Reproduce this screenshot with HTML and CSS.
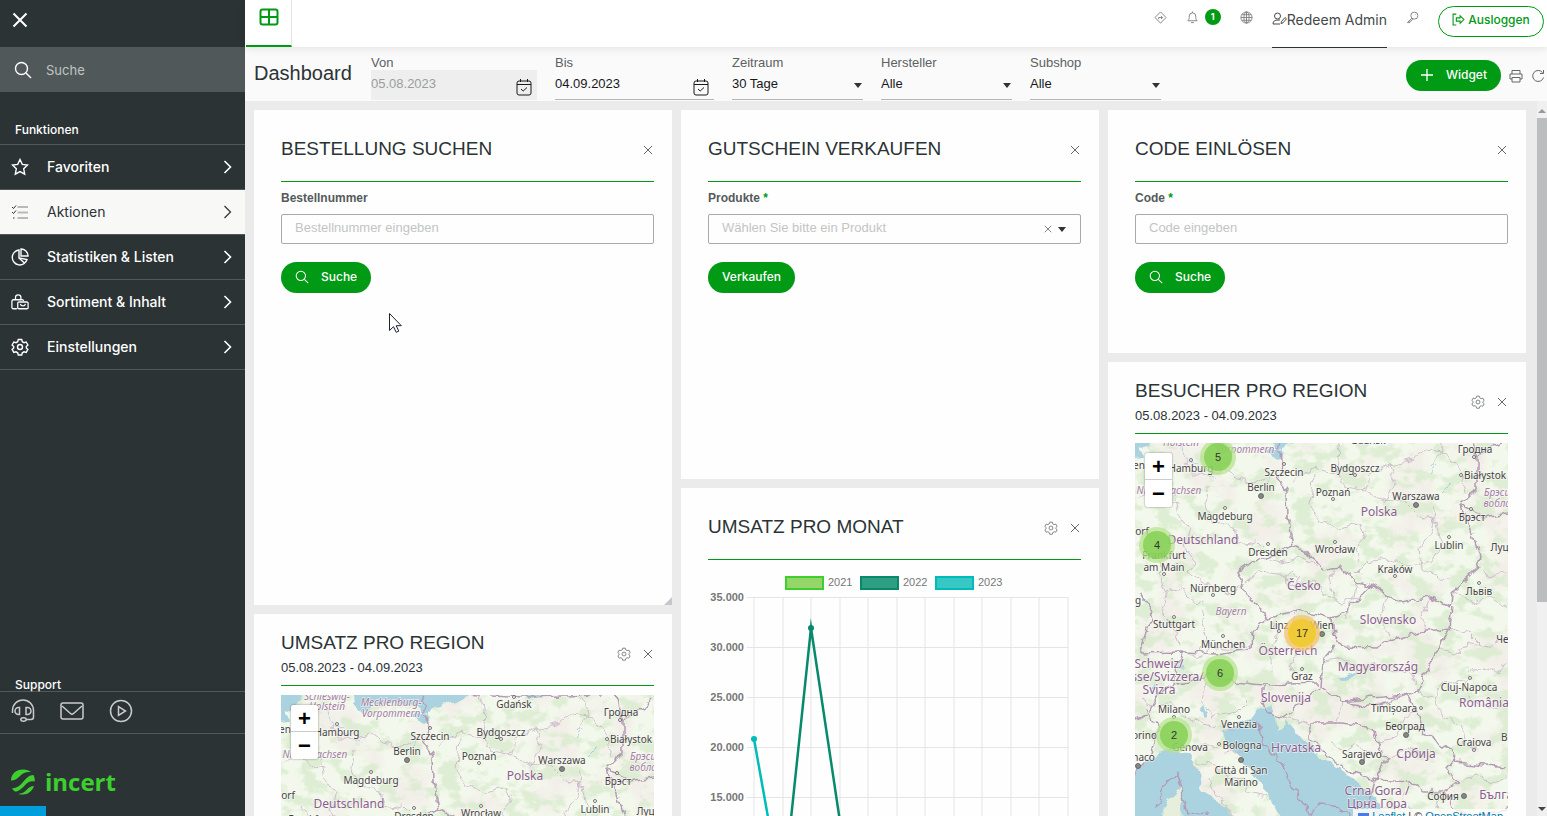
FILE: index.html
```html
<!DOCTYPE html>
<html lang="de">

<head>
  <meta charset="UTF-8">
  <title>Dashboard</title>
  <meta name="viewport" content="width=device-width, initial-scale=1.0">
  <link rel="stylesheet" href="styles.css">
</head>

<body>

  <!-- shared icons and map layer -->
  <svg class="sprite" aria-hidden="true">
    <symbol id="i-search" viewBox="0 0 18 18"><circle cx="7.5" cy="7.5" r="6"/><path d="M12 12l5 5"/></symbol>
    <symbol id="i-close" viewBox="0 0 16 16"><path d="M1.500 1.500l13 13M14.500 1.500l-13 13"/></symbol>
    <symbol id="i-chevron" viewBox="0 0 8 14"><path d="M1 1l6 6-6 6"/></symbol>
    <symbol id="i-gear" viewBox="0 0 18 18">
      <path d="M7.300 1.500h3.400l.6 2.200 1.700 1 2.200-.7 1.700 3-1.600 1.500v1.400l1.600 1.500-1.700 3-2.200-.6-1.700 1-.6 2.200H7.300l-.6-2.200-1.700-1-2.200.6-1.700-3 1.600-1.500V8.500L1.100 7l1.700-3 2.200.7 1.700-1z"/>
      <circle cx="9" cy="9" r="2.500"/>
    </symbol>
    <symbol id="i-calendar" viewBox="0 0 16 18"><path d="M3 3h10a2 2 0 0 1 2 2v10a2 2 0 0 1-2 2H3a2 2 0 0 1-2-2V5a2 2 0 0 1 2-2zM1 6.500h14M4.500 1v3M11.500 1v3M5 11l2.200 2L11 9.500"/></symbol>

    <filter id="rough" x="-5%" y="-5%" width="110%" height="110%">
      <feTurbulence type="fractalNoise" baseFrequency="0.1" numOctaves="2" seed="4" result="n"/>
      <feDisplacementMap in="SourceGraphic" in2="n" scale="10" xChannelSelector="R" yChannelSelector="G"/>
    </filter>
    <filter id="forest" x="0" y="0" width="100%" height="100%">
      <feTurbulence type="fractalNoise" baseFrequency="0.05 0.07" numOctaves="5" seed="11"/>
      <feColorMatrix values="0 0 0 0 0.69  0 0 0 0 0.83  0 0 0 0 0.61  0 7 0 0 -3.4"/>
    </filter>
    <filter id="fields" x="0" y="0" width="100%" height="100%">
      <feTurbulence type="fractalNoise" baseFrequency="0.02" numOctaves="4" seed="3"/>
      <feColorMatrix values="0 0 0 0 0.90  0 0 0 0 0.94  0 0 0 0 0.84  5 0 0 0 -1.7"/>
    </filter>

    <symbol id="map-base" viewBox="0 0 373 396">
      <rect width="373" height="396" fill="#f2efe9"/>
      <rect width="373" height="396" filter="url(#fields)"/>
      <rect width="373" height="396" filter="url(#forest)" opacity="0.75"/>
      <g filter="url(#rough)">
        <g fill="#aad3df">
          <path d="M-8-8h30l-7 22-10 5 2 8-15 2z"/>
          <path d="M72-8h120l-3 9-20 6-26 11-8-8-20-2-22 1-10 9-7-5z"/>
          <path d="M236-8h26l-3 9-12 3z"/>
          <path d="M108 291l16-12 12-5 4 12 3 17 8-15 6 8 12 14 22 20 32 20 16 17 20 25-108 1-12-18-10-18-17-23-19-20-5-14z"/>
          <path d="M-8 350l8-8 15-13 17-12 9 2 14 7 10 15 2 20 25 15 10 22H-8z"/>
          <path d="M204 249l8-5 11-4-4 5-10 5z"/>
          <path d="M126 17l10 2 12-2-2 12-6-2zM44 239l3-5 2 6zM14 256l6-5 2 5zM68 276l3 5-1 6-4-4z"/>
        </g>
        <path d="M28 376l8-10 9-9 2 12-3 30H30z" fill="#e8eedc"/>
        <path d="M43 12l6 14 12 8 9 10 12 3M137 44l-6 12M318 50l-12 12M300 34l-6 8" fill="none" stroke="#aad3df"/>
        <g class="regions">
          <path d="M50 28l8 15 20 0 10-6 14 10 22 5 12-8M73 56l-2 18 6 18 22 5 4 16 18-3 8 8M40 62l4 24 9 14-4 16 10 14-6 12 12 9 20 4 9 8 16-10M5 66l14-4 12 10 14 2M20 110l8 14-4 22 8 18-6 18 12 12 6 20M28 162l20-4 12 14 8-2-2 20 6 18-8 14M158 50l20-12 24 4 8 14 18 3 20 10 22 2 14 14 18 6 4 22-10 18-24 6-18-10-22 4-12 12M178 42l-2 32 6 14 22 10 22-6 4 12-8 16 2 10"/>
          <path d="M202 42l2-24-6-18M228 60l8-18 20-8 22-6 14-10 20 4 14 20 4 20M250 71l10-22-4-16M296 34l12-14-10-20M300 75l-4 26-12 16 2 22 14 6 14 4M111 151l14-10 20 2 14 12 22-6 4 14 20 8 18-4M130 127l14 4 22-4 16 6M200 136l-4 16 4 16M150 146l6-4 7 6-4 5-8-1z"/>
          <path d="M48 221l16 6 12-10 14 2 12-6 16 2M70 254l-4 18 12 14 24-4 12-12M8 268l12 8 18-4 10 12 22 10 30 6M30 296l10 16 20 4 30-2 18 6M60 330l22 4 10 12 16 2 4 14 20 4M75 345l4 18 12 10 10 20M140 190l2 18-10 12 4 20M162 179l-6 18 8 18-8 20 10 16M187 231l18-4 14 8 20-3 14 10 22-2 6 12M222 151l-4 20-8 18M252 164l-6 26 8 14M295 167l-8 18 4 16"/>
          <path d="M148 286l20 4 7 4M208 271l-8 22M282 262l18 4 8-14 22-2 12-14 20 4 14-10M300 266l6 20 20 8 4 18 14 8M330 250l6 20 20 6 16-4M303 217l20 6 10-12 18 4 20-8M342 137l14 8 18-4M318 161l20 10 14-6 20 10M315 197l20 6 12 12M195 310l16 10 10-6 16 10M252 327l20-10 16 4M242 311l18-4 10-20 12-6M275 351l-8 18 12 14M305 361l-4 14 12 16M322 351l20-6 14 8 16-8M108 321l-20 2"/>
        </g>
        <g class="borders">
          <path d="M141 1l4 19 2 22-3 10 8 10 1 23 5 29-30 13-26 12 5 12 3 13 18 17 5 6-15 14-1 16-34 6-35-2-43 1"/>
          <path d="M158 114l24 15 6 10 15-3 19 15 15 4 15 9 13 7 30-4 20 9 3-15 24-24 3-10-10-33-10-20 17-17 0-33-10-26"/>
          <path d="M133 187l29-8 36 8 14-6 13-14 12-13M198 187l2 17 8 12 34 1 13-8 30-8 30-4 3-21M315 197l-12 20-15 30-6 15-14 4-36 10-24-5-23-17 2-23 13-17"/>
          <path d="M5 221l6-20 7-17-12-20M48 221l-8 20-2 13 20-4 17-6 23 7 30 3 54-2M128 254v13l4 14 16 5 20-15 17-15M208 271l30-4 34-3 10 17 6 20 27 16 5 14 52 5M320 327l-8 10 10 14-14 10M38 254l-14 8-10 20-14 6"/>
          <path d="M175 292h33l30 5 4 14 10 16-10 17-2 5-28-10-17-12-20-20zM240 349l35 2 14 10 19 0M240 349l-4 20 10 16M308 361l10 16 20 8 34-6M325 74l24 12 24-4M342 24l20-10 10-12M182-2l60 4 80-2"/>
          <path d="M0 342l14-14 8-28-10-24M122 290l6 24 20 20 12 24 14 24 14-10 16 4 12 12M22 378l6-24 14-12 4 18 6 24 22-2"/>
        </g>
      </g>
    </symbol>
  </svg>

  <div class="app">

    <aside class="sidebar">
      <button class="menu-close" type="button" aria-label="Menü schließen"><svg class="icon"><use href="#i-close"/></svg></button>
      <div class="menu-search">
        <svg class="icon"><use href="#i-search"/></svg>
        <input type="text" placeholder="Suche" aria-label="Suche">
      </div>
      <h3 class="menu-title">Funktionen</h3>
      <ul class="menu">
        <li><a href="#">
          <svg class="icon" viewBox="0 0 18 18"><path d="M9 1.500l2.300 4.900 5.200.7-3.800 3.700 1 5.400L9 13.600l-4.700 2.600 1-5.400L1.500 7.100l5.200-.7z"/></svg>
          <span>Favoriten</span><svg class="chevron"><use href="#i-chevron"/></svg></a></li>
        <li><a href="#" class="active">
          <svg class="icon" viewBox="0 0 18 18"><path d="M6.500 4H17M6.500 9.500H17M6.500 15H17" stroke="#b9bab5" stroke-width="2"/><path d="M1 4l1.500 1.500L5 2.500M1 9l1.500 1.500L5 7.500M2 15h1.500" stroke-width="1"/></svg>
          <span>Aktionen</span><svg class="chevron"><use href="#i-chevron"/></svg></a></li>
        <li><a href="#">
          <svg class="icon" viewBox="0 0 18 18"><path d="M8 2a7.500 7.500 0 1 0 8 9.500L8 10z"/><path d="M10 1v7h7a7 7 0 0 0-7-7zM8 10l5.500 5"/></svg>
          <span>Statistiken &amp; Listen</span><svg class="chevron"><use href="#i-chevron"/></svg></a></li>
        <li><a href="#">
          <svg class="icon" viewBox="0 0 20 18"><path d="M6.500 16.500h-4A1.500 1.500 0 0 1 1 15V8a1.500 1.500 0 0 1 1.500-1.500h10A1.500 1.500 0 0 1 14 8M5 6V4a3 3 0 0 1 6 0v2M8.500 9H18A1.200 1.200 0 0 1 19 10.200v5.100a1.200 1.200 0 0 1-1 1.200H8.500a1.200 1.200 0 0 1-1-1.200v-5.100a1.200 1.200 0 0 1 1-1.200zM10.500 11a2.800 2.800 0 0 0 5.500 0"/></svg>
          <span>Sortiment &amp; Inhalt</span><svg class="chevron"><use href="#i-chevron"/></svg></a></li>
        <li><a href="#">
          <svg class="icon"><use href="#i-gear"/></svg>
          <span>Einstellungen</span><svg class="chevron"><use href="#i-chevron"/></svg></a></li>
      </ul>

      <div class="support">
        <h3 class="support-title">Support</h3>
        <div class="support-links">
          <a href="#" aria-label="Hotline"><svg viewBox="0 0 24 24"><path d="M1.500 14v-2.500a10.500 10.500 0 0 1 21 0V18a2.500 2.500 0 0 1-2.500 2.500h-5M8.500 8.500v7H7.500a3.500 3.500 0 0 1 0-7zM15 8.500v7h1.500a3.500 3.500 0 0 0 0-7z"/><ellipse cx="12.500" cy="20.500" rx="2.700" ry="1.700"/></svg></a>
          <a href="#" aria-label="E-Mail"><svg viewBox="0 0 24 24"><rect x="1" y="4" width="22" height="16" rx="2"/><path d="M2 7l8.500 7.500a2.200 2.200 0 0 0 3 0L22 7"/></svg></a>
          <a href="#" aria-label="Videos"><svg viewBox="0 0 24 24"><circle cx="12" cy="12" r="10.500"/><path d="M9.500 7.500v9l7-4.500z"/></svg></a>
        </div>
      </div>
      <a class="brand" href="#">
        <svg viewBox="0 0 24 26"><path d="M0 11.500C0 5 5 .5 12 .5c3.500 0 6 1 8 2.500-5-.5-8 1-11 4-2.500 2.500-5 4.500-9 4.500z"/><path d="M1 19.500c5-.5 8-3 11-6.500s6-7 10.500-7c1 2 1.500 4 1.200 6.500-4-1-7 .5-10 4S6.500 23 4 22.500c-1.500-1-2.500-2-3-3z"/><path d="M7 25c5-.5 7-2.500 9-4.500s4-3.500 7-3.500c-2 5.500-6 8.500-11 8.500-2 0-3.500 0-5-.5z"/></svg>
        <span>incert</span>
      </a>
      <div class="progress"></div>
    </aside>

    <main class="main">

      <header class="topbar">
        <a class="tab" href="#" aria-label="Dashboard"><svg viewBox="0 0 20 18"><rect x="1.500" y="1.500" width="17" height="15" rx="2"/><path d="M10 1.500v15M1.500 9h17"/></svg></a>
        <nav class="tools">
          <a href="#" aria-label="Wegweiser"><svg viewBox="0 0 14 14"><path d="M7 1l6 6-6 6-6-6zM5 9V7h4M7.500 5.200L9.300 7 7.500 8.800"/></svg></a>
          <a href="#" class="bell" aria-label="Meldungen"><svg viewBox="0 0 14 14"><path d="M2 10.500c1.500-1.500 1.500-3 1.500-5a3.500 3.500 0 0 1 7 0c0 2 0 3.500 1.500 5zM5.500 12.500h3M7 2V.5"/></svg><span class="badge">1</span></a>
          <a href="#" aria-label="Sprache"><svg viewBox="0 0 14 14"><circle cx="7" cy="7" r="6"/><ellipse cx="7" cy="7" rx="2.800" ry="6"/><path d="M1 7h12M2 4h10M2 10h10M7 1v12"/></svg></a>
          <a href="#" class="user"><svg viewBox="0 0 15 14"><circle cx="5.500" cy="4" r="3"/><path d="M8 12H1c0-3 2-4 5-4h2M9 11.500l.5-2L13 5.500l1.500 1.300-3.500 4z"/></svg>Redeem Admin</a>
          <a href="#" aria-label="Passwort"><svg viewBox="0 0 14 14"><circle cx="9" cy="5" r="3.800"/><path d="M6.300 7.700L1.500 12.500M1.500 12.500H4v-1.500h1.500L7.200 8.500M10 3.500h.5"/></svg></a>
          <button class="logout" type="button"><svg viewBox="0 0 12 12"><path d="M4 1H1v10h3M4 4.500h3.500V2.500L11 6 7.500 9.500v-2H4z"/></svg>Ausloggen</button>
        </nav>
      </header>

      <div class="filters">
        <h1>Dashboard</h1>
        <div class="field field-from">
          <label for="from">Von</label>
          <div class="control"><input type="text" id="from" value="05.08.2023" disabled><svg><use href="#i-calendar"/></svg></div>
        </div>
        <div class="field field-to">
          <label for="to">Bis</label>
          <div class="control"><input type="text" id="to" value="04.09.2023"><svg><use href="#i-calendar"/></svg></div>
        </div>
        <div class="field">
          <label for="period">Zeitraum</label>
          <div class="control caret"><select id="period"><option>30 Tage</option></select></div>
        </div>
        <div class="field">
          <label for="vendor">Hersteller</label>
          <div class="control caret"><select id="vendor"><option>Alle</option></select></div>
        </div>
        <div class="field">
          <label for="subshop">Subshop</label>
          <div class="control caret"><select id="subshop"><option>Alle</option></select></div>
        </div>
        <div class="actions">
          <button class="btn" type="button"><svg viewBox="0 0 14 14"><path d="M7 1v12M1 7h12"/></svg>Widget</button>
          <button class="tool" type="button" aria-label="Drucken"><svg viewBox="0 0 14 14"><path d="M3 5V1.500h8V5M3 10H1V5h12v5h-2M3 8.500h8V13H3z"/></svg></button>
          <button class="tool" type="button" aria-label="Aktualisieren"><svg viewBox="0 0 14 14"><path d="M11.500 3.500A5.500 5.500 0 1 0 12.500 8.500M12.500 1v3.500H9"/></svg></button>
        </div>
      </div>

      <div class="content">
        <div class="board">

          <section class="card order-search">
            <div class="card-head">
              <h2>BESTELLUNG SUCHEN</h2>
              <button class="tool small" type="button" aria-label="Entfernen"><svg><use href="#i-close"/></svg></button>
            </div>
            <form class="card-body">
              <label for="order">Bestellnummer</label>
              <input type="text" id="order" placeholder="Bestellnummer eingeben">
              <button class="btn" type="button"><svg><use href="#i-search"/></svg>Suche</button>
            </form>
            <span class="resize"></span>
          </section>

          <section class="card voucher">
            <div class="card-head">
              <h2>GUTSCHEIN VERKAUFEN</h2>
              <button class="tool small" type="button" aria-label="Entfernen"><svg><use href="#i-close"/></svg></button>
            </div>
            <form class="card-body">
              <label for="product">Produkte <span class="required">*</span></label>
              <div class="combo caret">
                <select id="product"><option>Wählen Sie bitte ein Produkt</option></select>
                <button type="button" class="clear" aria-label="Auswahl löschen"><svg><use href="#i-close"/></svg></button>
              </div>
              <button class="btn" type="button">Verkaufen</button>
            </form>
          </section>

          <section class="card redeem">
            <div class="card-head">
              <h2>CODE EINLÖSEN</h2>
              <button class="tool small" type="button" aria-label="Entfernen"><svg><use href="#i-close"/></svg></button>
            </div>
            <form class="card-body">
              <label for="code">Code <span class="required">*</span></label>
              <input type="text" id="code" placeholder="Code eingeben">
              <button class="btn" type="button"><svg><use href="#i-search"/></svg>Suche</button>
            </form>
          </section>

          <section class="card sales-region">
            <div class="card-head">
              <div>
                <h2>UMSATZ PRO REGION</h2>
                <p>05.08.2023 - 04.09.2023</p>
              </div>
              <button class="tool" type="button" aria-label="Einstellungen"><svg><use href="#i-gear"/></svg></button>
              <button class="tool small" type="button" aria-label="Entfernen"><svg><use href="#i-close"/></svg></button>
            </div>
            <div class="card-body">
              <div class="map">
                <svg class="map-layer" viewBox="0 0 373 380">
                  <use href="#map-base" width="373" height="396"/>
                  <g class="places">
                    <text x="56" y="41">Hamburg</text><circle cx="56" cy="29" r="1.500"/>
                    <text x="149" y="45">Szczecin</text><circle cx="149" cy="33" r="1.500"/>
                    <text x="220" y="41">Bydgoszcz</text><circle cx="220" cy="44" r="1.500"/>
                    <text x="233" y="13">Gdańsk</text><circle cx="233" cy="2" r="1.500"/>
                    <text x="340" y="21">Гродна</text><circle cx="339" cy="25" r="1.500"/>
                    <text x="350" y="48">Białystok</text><circle cx="326" cy="44" r="1.500"/>
                    <text x="126" y="60">Berlin</text><circle class="capital" cx="126" cy="65" r="2.500"/>
                    <text x="198" y="65">Poznań</text><circle cx="198" cy="68" r="1.500"/>
                    <text x="281" y="69">Warszawa</text><circle class="capital" cx="281" cy="74" r="2.500"/>
                    <text x="337" y="90">Брэст</text><circle cx="336" cy="78" r="1.500"/>
                    <text x="90" y="89">Magdeburg</text><circle cx="90" cy="77" r="1.500"/>
                    <text x="4" y="104">dorf</text>
                    <text x="4" y="38">en</text>
                    <text x="133" y="125">Dresden</text><circle cx="133" cy="113" r="1.500"/>
                    <text x="200" y="122">Wrocław</text><circle cx="200" cy="111" r="1.500"/>
                    <text x="314" y="118">Lublin</text><circle cx="314" cy="106" r="1.500"/>
                    <text x="370" y="120">Луцьк</text>
                    <text x="29" y="128">Frankfurt</text>
                  </g>
                  <g class="regions-text">
                    <text x="46" y="5">Schleswig-</text><text x="46" y="15">Holstein</text>
                    <text x="110" y="11">Mecklenburg-</text><text x="110" y="22">Vorpommern</text>
                    <text x="34" y="63">Niedersachsen</text>
                    <text x="370" y="65">Брэсцкая</text><text x="370" y="76">вобласць</text>
                  </g>
                  <g class="countries">
                    <text x="68" y="113">Deutschland</text><text x="244" y="85">Polska</text>
                  </g>
                </svg>
                <div class="zoom"><button type="button" aria-label="Vergrößern">+</button><button type="button" aria-label="Verkleinern">−</button></div>
              </div>
            </div>
          </section>

          <section class="card sales-month">
            <div class="card-head">
              <h2>UMSATZ PRO MONAT</h2>
              <button class="tool" type="button" aria-label="Einstellungen"><svg><use href="#i-gear"/></svg></button>
              <button class="tool small" type="button" aria-label="Entfernen"><svg><use href="#i-close"/></svg></button>
            </div>
            <div class="card-body">
              <svg class="chart" viewBox="0 0 373 400">
                <g stroke-width="2">
                  <rect x="78" y="8" width="37" height="12" fill="#96d56a" stroke="#3ccf2e"/>
                  <rect x="153" y="8" width="37" height="12" fill="#2f9f83" stroke="#078a6c"/>
                  <rect x="228" y="8" width="37" height="12" fill="#37c8c6" stroke="#00bcb8"/>
                </g>
                <g class="legend"><text x="120" y="17">2021</text><text x="195" y="17">2022</text><text x="270" y="17">2023</text></g>
                <path class="grid-x" d="M75 28v350M103 28v350M132 28v350M160 28v350M189 28v350M217 28v350M246 28v350M274 28v350M303 28v350M331 28v350M360 28v350"/>
                <path class="grid-y" d="M46 28v350M39 28.500h321M39 78.500h321M39 128.500h321M39 178.500h321M39 228.500h321M39 278.500h321M39 328.500h321"/>
                <g class="ticks">
                  <text x="36" y="32">35.000</text><text x="36" y="82">30.000</text><text x="36" y="132">25.000</text>
                  <text x="36" y="182">20.000</text><text x="36" y="232">15.000</text><text x="36" y="282">10.000</text>
                </g>
                <path class="line y2023" d="M46 170l29 162"/>
                <path class="line y2022" d="M75 326L103 59l40 267"/>
                <circle cx="46" cy="170" r="3" fill="#00bcb8"/>
                <circle cx="103" cy="59" r="3" fill="#078a6c"/>
              </svg>
            </div>
          </section>

          <section class="card visitors">
            <div class="card-head">
              <div>
                <h2>BESUCHER PRO REGION</h2>
                <p>05.08.2023 - 04.09.2023</p>
              </div>
              <button class="tool" type="button" aria-label="Einstellungen"><svg><use href="#i-gear"/></svg></button>
              <button class="tool small" type="button" aria-label="Entfernen"><svg><use href="#i-close"/></svg></button>
            </div>
            <div class="card-body">
              <div class="map">
                <svg class="map-layer" viewBox="0 12 373 380">
                  <use href="#map-base" width="373" height="396"/>
                  <g class="places">
                    <text x="56" y="41">Hamburg</text><circle cx="56" cy="29" r="1.500"/>
                    <text x="149" y="45">Szczecin</text><circle cx="149" cy="33" r="1.500"/>
                    <text x="220" y="41">Bydgoszcz</text><circle cx="220" cy="44" r="1.500"/>
                    <text x="233" y="13">Gdańsk</text>
                    <text x="340" y="22">Гродна</text><circle cx="339" cy="26" r="1.500"/>
                    <text x="350" y="48">Białystok</text><circle cx="326" cy="44" r="1.500"/>
                    <text x="126" y="60">Berlin</text><circle class="capital" cx="126" cy="65" r="2.500"/>
                    <text x="198" y="65">Poznań</text><circle cx="198" cy="68" r="1.500"/>
                    <text x="281" y="69">Warszawa</text><circle class="capital" cx="281" cy="74" r="2.500"/>
                    <text x="337" y="90">Брэст</text><circle cx="336" cy="78" r="1.500"/>
                    <text x="90" y="89">Magdeburg</text><circle cx="90" cy="77" r="1.500"/>
                    <text x="4" y="104">dorf</text><text x="4" y="38">en</text>
                    <text x="133" y="125">Dresden</text><circle cx="133" cy="113" r="1.500"/>
                    <text x="200" y="122">Wrocław</text><circle cx="200" cy="111" r="1.500"/>
                    <text x="314" y="118">Lublin</text><circle cx="314" cy="106" r="1.500"/>
                    <text x="370" y="120">Луцьк</text>
                    <text x="29" y="128">Frankfurt</text><text x="29" y="140">am Main</text><circle cx="29" cy="143" r="1.500"/>
                    <text x="260" y="142">Kraków</text><circle cx="260" cy="145" r="1.500"/>
                    <text x="78" y="161">Nürnberg</text><circle cx="78" cy="164" r="1.500"/>
                    <text x="344" y="164">Львів</text><circle cx="344" cy="152" r="1.500"/>
                    <text x="39" y="197">Stuttgart</text><circle cx="39" cy="186" r="1.500"/>
                    <text x="3" y="173">g</text>
                    <text x="144" y="198">Linz</text><circle cx="144" cy="200" r="1.500"/>
                    <text x="187" y="198">Wien</text><circle class="capital" cx="187" cy="203" r="2.500"/>
                    <text x="88" y="217">München</text><circle cx="88" cy="205" r="1.500"/>
                    <text x="382" y="212">Чернівці</text>
                    <text x="167" y="249">Graz</text><circle cx="167" cy="238" r="1.500"/>
                    <text x="334" y="260">Cluj-Napoca</text><circle cx="335" cy="247" r="1.500"/>
                    <text x="39" y="282">Milano</text><circle cx="39" cy="286" r="1.500"/>
                    <text x="259" y="281">Timișoara</text><circle cx="286" cy="277" r="1.500"/>
                    <text x="270" y="299">Београд</text><circle class="capital" cx="271" cy="304" r="2.500"/>
                    <text x="104" y="297">Venezia</text><circle cx="104" cy="286" r="1.500"/>
                    <text x="7" y="308">Torino</text>
                    <text x="55" y="320">Genova</text>
                    <text x="107" y="318">Bologna</text><circle cx="84" cy="313" r="1.500"/>
                    <text x="339" y="315">Craiova</text><circle cx="339" cy="319" r="1.500"/>
                    <text x="388" y="310">București</text>
                    <text x="1" y="330">Monaco</text><circle class="capital" cx="3" cy="335" r="2.500"/>
                    <text x="227" y="327">Sarajevo</text><circle class="capital" cx="227" cy="331" r="2.500"/>
                    <text x="106" y="343">Città di San</text><text x="106" y="355">Marino</text><circle class="capital" cx="106" cy="329" r="2.500"/>
                    <text x="308" y="369">София</text><circle class="capital" cx="329" cy="365" r="2.500"/>
                  </g>
                  <g class="regions-text">
                    <text x="46" y="15">Holstein</text><text x="110" y="22">Vorpommern</text>
                    <text x="34" y="63">Niedersachsen</text><text x="96" y="184">Bayern</text>
                    <text x="370" y="65">Брэсцкая</text><text x="370" y="76">вобласць</text>
                  </g>
                  <g class="countries">
                    <text x="68" y="113">Deutschland</text><text x="244" y="85">Polska</text>
                    <text x="169" y="159">Česko</text><text x="253" y="193">Slovensko</text>
                    <text x="153" y="224">Österreich</text><text x="243" y="240">Magyarország</text>
                    <text x="24" y="237">Schweiz/</text><text x="24" y="250">Suisse/Svizzera/</text><text x="24" y="263">Svizra</text>
                    <text x="151" y="271">Slovenija</text><text x="349" y="276">România</text>
                    <text x="161" y="321">Hrvatska</text><text x="281" y="327">Србија</text>
                    <text x="242" y="364">Crna Gora /</text><text x="242" y="377">Црна Гора</text>
                    <text x="372" y="368">България</text>
                  </g>
                  <g class="clusters">
                    <circle cx="83" cy="26" r="18"/><circle class="core" cx="83" cy="26" r="14"/><text x="83" y="30">5</text>
                    <circle cx="22" cy="114" r="18"/><circle class="core" cx="22" cy="114" r="14"/><text x="22" y="118">4</text>
                    <circle cx="85" cy="242" r="18"/><circle class="core" cx="85" cy="242" r="14"/><text x="85" y="246">6</text>
                    <circle cx="39" cy="304" r="18"/><circle class="core" cx="39" cy="304" r="14"/><text x="39" y="308">2</text>
                  </g>
                  <g class="clusters medium">
                    <circle cx="167" cy="202" r="18"/><circle class="core" cx="167" cy="202" r="14"/><text x="167" y="206">17</text>
                  </g>
                </svg>
                <div class="zoom"><button type="button" aria-label="Vergrößern">+</button><button type="button" aria-label="Verkleinern">−</button></div>
                <div class="attribution"><span class="flag"></span><a href="#">Leaflet</a> | © <a href="#">OpenStreetMap</a></div>
              </div>
            </div>
          </section>

        </div>
        <div class="scrollbar"><span class="up"></span><span class="thumb"></span><span class="down"></span></div>
      </div>
    </main>
  </div>

  <svg class="pointer" viewBox="0 0 13 20"><path d="M.5.500v17l4-3.800 2.700 5.600 2.600-1.200-2.600-5.400h5.100z" fill="#fff" stroke="#1b2330"/></svg>

</body>

</html>
```
FILE: styles.css
```css
* {
  box-sizing: border-box;
}

body {
  margin: 0;
  font-family: "Liberation Sans", Arial, sans-serif;
  font-size: 13px;
  color: #2b3335;
  overflow: hidden;
}

h1, h2, h3, p, ul {
  margin: 0;
  padding: 0;
  font-weight: normal;
}

a {
  color: inherit;
  text-decoration: none;
}

button, input, select {
  font-family: inherit;
  font-size: 13px;
  color: inherit;
  border: none;
  padding: 0;
  background: none;
}

button {
  cursor: pointer;
}

svg {
  display: block;
  flex: none;
  fill: none;
  stroke: currentColor;
}

.sprite {
  position: absolute;
  width: 0;
  height: 0;
}

.app {
  display: flex;
  height: 100vh;
}

/* sidebar */

.sidebar {
  display: flex;
  flex-direction: column;
  flex: none;
  width: 245px;
  background: #2b3335;
  color: #fff;
  font-family: Inter, sans-serif;
}

.icon {
  width: 18px;
  height: 18px;
  stroke-width: 1.4;
}

.menu-close {
  height: 47px;
  padding: 0 12px 7px;
}

.menu-close .icon {
  width: 16px;
  height: 16px;
  stroke-width: 2;
}

.menu-search {
  display: flex;
  align-items: center;
  gap: 14px;
  height: 45px;
  padding-left: 14px;
  background: #50585a;
}

.menu-search input {
  flex: 1;
  min-width: 0;
}

.menu-search input::placeholder {
  color: #c0c4c5;
  opacity: 1;
}

.menu-title {
  padding: 30px 15px 6px;
  font-size: 12px;
  line-height: 16px;
  font-weight: 500;
}

.menu {
  list-style: none;
  border-top: 1px solid #50585a;
}

.menu a {
  display: flex;
  align-items: center;
  gap: 18px;
  height: 45px;
  padding: 0 13px 0 11px;
  border-bottom: 1px solid #50585a;
  font-size: 14px;
  font-weight: 500;
}

.menu span {
  flex: 1;
  padding-bottom: 2px;
}

.menu .active {
  background: #f8f8f6;
  color: #2b3335;
  font-weight: normal;
}

.chevron {
  width: 9px;
  height: 14px;
  stroke-width: 1.6;
}

.active .chevron {
  stroke-width: 1.2;
}

.support {
  margin-top: auto;
  border-bottom: 1px solid #50585a;
}

.support-title {
  padding: 0 15px;
  font-size: 12px;
  line-height: 13px;
  font-weight: 500;
  border-bottom: 1px solid #50585a;
}

.support-links {
  display: flex;
  gap: 25px;
  height: 41px;
  padding: 7px 11px;
  color: #c9cbcb;
}

.support-links svg {
  width: 24px;
  height: 24px;
  stroke-width: 1.5;
}

.brand {
  display: flex;
  align-items: center;
  gap: 10px;
  height: 72px;
  padding: 24px 11px 0;
  color: #3ccf2e;
  font: bold 24px "Open Sans", sans-serif;
}

.brand svg {
  width: 24px;
  height: 26px;
  fill: currentColor;
  stroke: none;
}

.brand span {
  line-height: 30px;
}

.progress {
  width: 46px;
  height: 10px;
  background: #009fdc;
}

/* top bar */

.main {
  display: flex;
  flex-direction: column;
  flex: 1;
  min-width: 0;
  background: #ebebeb;
}

.topbar {
  position: relative;
  z-index: 1;
  display: flex;
  justify-content: space-between;
  height: 47px;
  padding: 0 3px 0 1px;
  background: #fff;
  box-shadow: 0 2px 8px rgba(0, 0, 0, 0.09);
}

.tab {
  display: flex;
  justify-content: center;
  width: 46px;
  padding-top: 8px;
  border-right: 1px solid #e4e4e4;
  border-bottom: 2px solid #009a14;
  color: #009a14;
}

.tab svg {
  width: 20px;
  height: 18px;
  stroke-width: 2;
}

.tools {
  display: flex;
  gap: 19px;
  font-family: Inter, sans-serif;
  color: #7c8182;
}

.tools a {
  display: flex;
  align-items: center;
  height: 34px;
}

.tools svg {
  width: 13px;
  height: 13px;
}

.bell {
  gap: 6px;
}

.badge {
  width: 16px;
  height: 16px;
  border-radius: 50%;
  background: #009a14;
  color: #fff;
  font-size: 9px;
  font-weight: bold;
  line-height: 16px;
  text-align: center;
}

.tools .user {
  height: 48px;
  padding-bottom: 9px;
  border-bottom: 1px solid #2b3335;
  color: #44494a;
  font-size: 14px;
}

.tools .user svg {
  width: 15px;
  height: 14px;
}

.logout {
  display: flex;
  align-items: center;
  justify-content: center;
  gap: 3px;
  width: 106px;
  height: 31px;
  margin-top: 6px;
  padding-bottom: 4px;
  border: 1px solid #009a14;
  border-radius: 16px;
  color: #009a14;
  font-weight: 500;
  font-size: 12px;
}

/* filters */

.filters {
  display: flex;
  gap: 18px;
  height: 54px;
  padding: 0 2px 1px 9px;
  background: #fafafa;
}

.filters h1 {
  min-width: 99px;
  font-size: 20px;
  line-height: 53px;
}

.field {
  width: 131px;
  padding-top: 8px;
}

.field-from {
  width: 166px;
}

.field-to {
  width: 159px;
}

.field label {
  display: block;
  height: 15px;
  line-height: 15px;
  color: #5c6162;
}

.control {
  position: relative;
  display: flex;
  height: 30px;
  border-bottom: 1px solid #b5b5b5;
  color: #16191a;
}

.control input,
.control select {
  flex: 1;
  width: 100%;
  min-width: 0;
  padding-bottom: 3px;
}

.control svg {
  width: 16px;
  height: 18px;
  margin: 8px 5px 0 0;
}

.field-from .control {
  background: #eee;
  border-color: #eee;
}

.field-from input {
  color: #9a9e9e;
}

select {
  appearance: none;
}

.caret::after {
  content: "";
  position: absolute;
  right: 1px;
  top: 13px;
  border: 4px solid transparent;
  border-top: 5px solid #333;
  border-bottom: none;
  pointer-events: none;
}

.actions {
  display: flex;
  align-items: center;
  gap: 8px;
  margin-left: auto;
  padding-top: 4px;
}

.btn {
  display: inline-flex;
  align-items: center;
  gap: 12px;
  height: 31px;
  padding: 0 14px 2px;
  border-radius: 16px;
  background: #009a14;
  color: #fff;
  font-family: Inter, sans-serif;
  font-size: 12px;
  font-weight: 500;
}

.btn svg {
  width: 14px;
  height: 14px;
  stroke-width: 1.3;
}

.tool {
  color: #62686a;
}

.tool svg {
  width: 14px;
  height: 14px;
}

.small svg {
  width: 10px;
  height: 10px;
  stroke-width: 1.6;
}

/* widget board: 117px rows */

.content {
  display: flex;
  flex: 1;
  min-height: 0;
}

.board {
  display: grid;
  flex: 1;
  grid-template-columns: repeat(3, minmax(0, 1fr));
  grid-auto-rows: 117px;
  gap: 9px;
  min-width: 0;
  padding: 9px 11px 9px 9px;
  overflow: hidden;
}

.card {
  position: relative;
  padding: 0 18px 0 27px;
  background: #fefefe;
}

.order-search {
  grid-area: 1 / 1 / span 4;
}

.sales-region {
  grid-area: 5 / 1 / span 4;
}

.voucher {
  grid-area: 1 / 2 / span 3;
}

.sales-month {
  grid-area: 4 / 2 / span 4;
}

.redeem {
  grid-area: 1 / 3 / span 2;
}

.visitors {
  grid-area: 3 / 3 / span 4;
}

.card-head {
  display: flex;
  align-items: center;
  gap: 12px;
  height: 72px;
  padding: 9px 1px 0 0;
  border-bottom: 1px solid #009a14;
}

.card-head > :first-child {
  flex: 1;
}

.card-head h2 {
  margin-bottom: 3px;
  font-size: 19px;
  line-height: 24px;
}

.card-head p {
  line-height: 20px;
}

.card-body {
  padding-top: 9px;
}

.card-body label {
  display: block;
  margin-bottom: 9px;
  line-height: 14px;
  font-weight: bold;
  font-size: 12px;
  color: #555a5a;
}

.required {
  color: #009a14;
}

.card-body input,
.combo select {
  display: block;
  width: 100%;
  height: 30px;
  padding: 0 13px 3px;
  border: 1px solid #a9a9a9;
  border-radius: 2px;
}

.card-body input::placeholder {
  color: #c3c5c4;
  opacity: 1;
}

.card-body .btn {
  margin-top: 18px;
}

.combo {
  position: relative;
}

.combo select {
  color: #c3c5c4;
}

.combo.caret::after {
  right: 15px;
  top: 13px;
}

.clear {
  position: absolute;
  right: 29px;
  top: 11px;
  color: #666;
}

.clear svg {
  width: 8px;
  height: 8px;
  stroke-width: 1.6;
}

.resize {
  position: absolute;
  right: 0;
  bottom: 0;
  border: 4px solid #c5c7cc;
  border-top-color: transparent;
  border-left-color: transparent;
}

/* chart */

.chart {
  width: 100%;
  stroke: none;
  font-size: 11px;
}

.legend,
.ticks {
  fill: #777;
}

.legend {
  font-size: 11px;
}

.ticks {
  font-weight: bold;
  text-anchor: end;
}

.grid-x {
  stroke: #f1f1f1;
  stroke-width: 2;
}

.grid-y {
  stroke: #e5e5e5;
}

.line {
  stroke-width: 2.5;
  stroke-miterlimit: 20;
}

.y2022 {
  stroke: #078a6c;
}

.y2023 {
  stroke: #00bcb8;
}

/* maps */

.map {
  position: relative;
  overflow: hidden;
}

.map-layer {
  width: 100%;
  stroke: none;
  font-family: "Noto Sans", sans-serif;
  font-size: 10px;
  text-anchor: middle;
}

.regions {
  fill: none;
  stroke: #c6b2c6;
  stroke-width: 0.8;
}

.borders {
  fill: none;
  stroke: #b49bb5;
  stroke-width: 1.5;
}

.places text,
.countries,
.regions-text {
  fill: #444;
  stroke: #fbfaf7;
  stroke-width: 1.5;
  stroke-opacity: 0.7;
  paint-order: stroke;
}

.places circle {
  fill: #fff;
  stroke: #555;
  stroke-width: 0.8;
}

.places .capital {
  fill: #888;
}

.countries {
  fill: #8a608f;
  font-size: 12px;
}

.regions-text {
  fill: #a380a6;
  font-style: italic;
}

.clusters {
  fill: rgba(181, 226, 140, 0.7);
  font: 11px "Liberation Sans", sans-serif;
}

.clusters .core {
  fill: rgba(125, 206, 75, 0.75);
}

.clusters.medium {
  fill: rgba(246, 194, 110, 0.75);
}

.medium .core {
  fill: rgba(238, 202, 40, 0.85);
}

.clusters text {
  fill: #333;
}

.zoom {
  position: absolute;
  left: 10px;
  top: 10px;
  display: flex;
  flex-direction: column;
  width: 27px;
  border-radius: 2px;
  background: #fff;
  box-shadow: 0 0 2px rgba(0, 0, 0, 0.5);
}

.zoom button {
  height: 27px;
  color: #000;
  font: bold 22px/27px "Liberation Sans", sans-serif;
}

.zoom button:first-child {
  border-bottom: 1px solid #ccc;
}

.attribution {
  position: absolute;
  right: 0;
  bottom: 0;
  padding: 0 5px;
  background: rgba(255, 255, 255, 0.8);
  font-size: 11px;
  line-height: 14px;
  color: #333;
}

.attribution a {
  color: #0078a8;
  text-decoration: underline;
}

.flag {
  display: inline-block;
  width: 11px;
  height: 7px;
  margin-right: 3px;
  background: linear-gradient(#4c7be1 50%, #ffd500 50%);
}

/* scrollbar */

.scrollbar {
  display: flex;
  flex-direction: column;
  align-items: center;
  width: 10px;
  padding: 8px 0 5px;
  background: #f0f0f0;
}

.scrollbar .up,
.scrollbar .down {
  border: 4px solid transparent;
  border-top: none;
  border-bottom: 4px solid #999;
}

.scrollbar .down {
  margin-top: auto;
  border-top: 4px solid #444;
  border-bottom: none;
}

.scrollbar .thumb {
  width: 100%;
  height: 69%;
  margin-top: 5px;
  background: #bcbdbf;
}

.pointer {
  position: absolute;
  left: 389px;
  top: 313px;
  width: 13px;
  height: 20px;
}
```
